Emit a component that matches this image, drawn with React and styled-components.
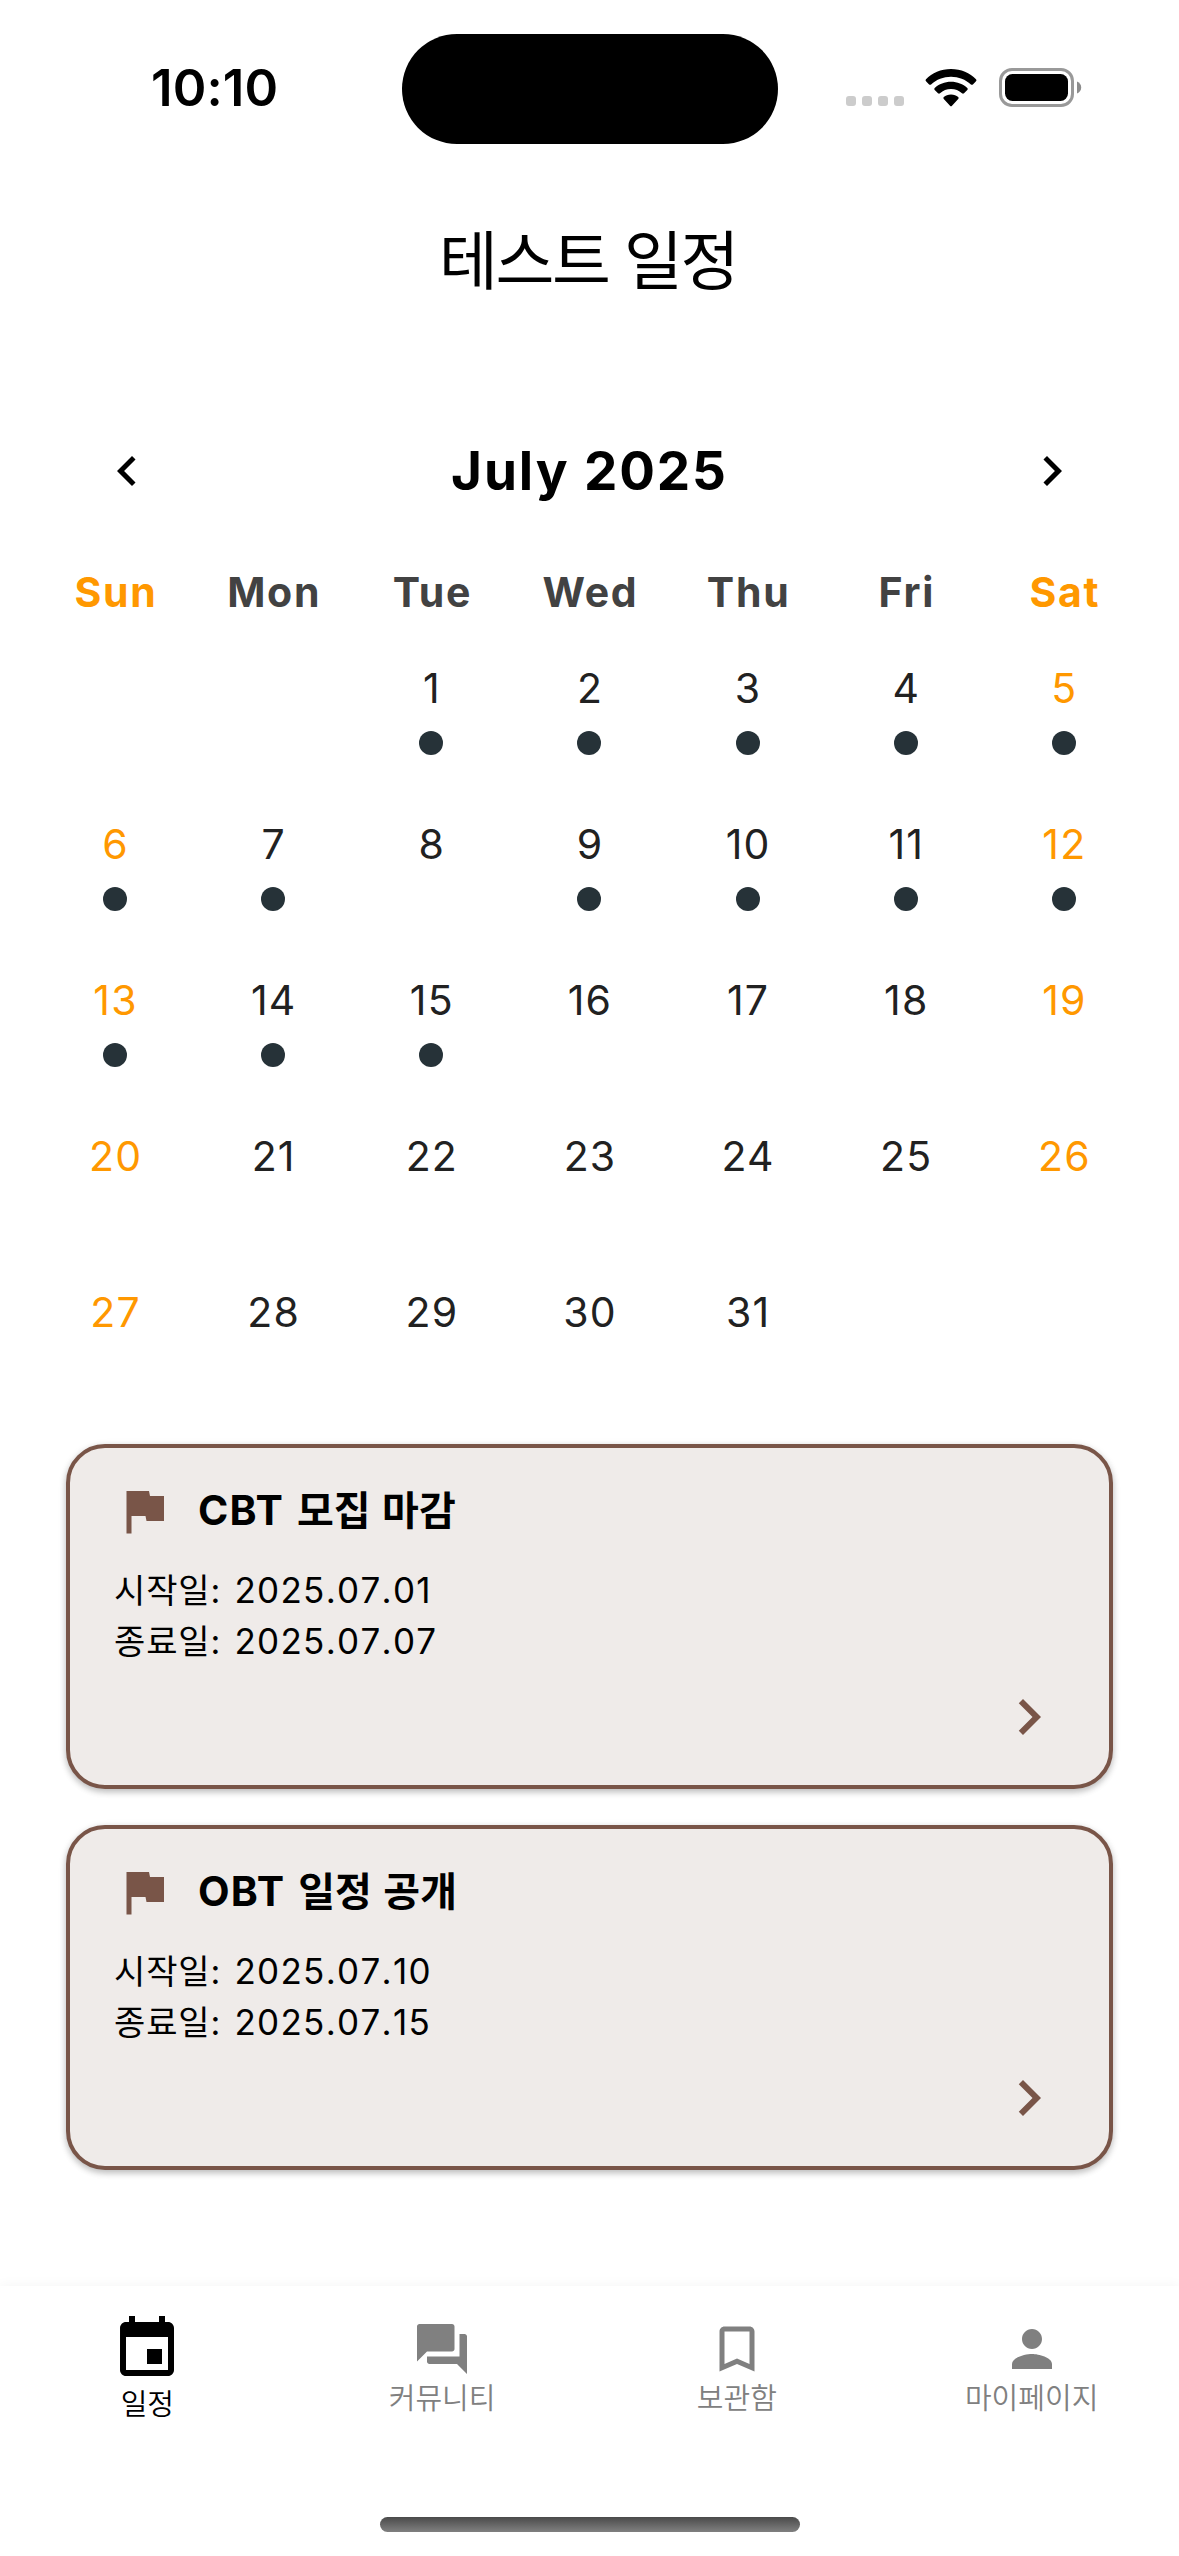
import React from "react";
import styled, { createGlobalStyle } from "styled-components";

const GlobalStyle = createGlobalStyle`
  * { box-sizing: border-box; }
  body { margin: 0; background: #fff; }
`;

const Screen = styled.div`
  width: 1179px;
  height: 2556px;
  display: flex;
  flex-direction: column;
  overflow: hidden;
  background: #fff;
  color: #000;
  font-family: Inter, "Noto Sans CJK KR", sans-serif;
  white-space: nowrap;
`;

const StatusBar = styled.header`
  height: 177px;
  flex: none;
  display: grid;
  grid-template-columns: 402px 376px 1fr;
`;

const Clock = styled.div`
  padding: 57px 0 0 151px;
  font-size: 51px;
  line-height: 62px;
  font-weight: 600;
  letter-spacing: 0.1px;
`;

const Island = styled.div`
  margin-top: 33.7px;
  height: 110.7px;
  border-radius: 56px;
  background: #000;
`;

const StatusIcons = styled.div`
  display: flex;
  align-items: flex-start;
  padding: 67px 0 0 68px;
`;

const Signal = styled.div`
  display: flex;
  gap: 6px;
  margin: 29px 21px 0 0;
`;

const SignalDot = styled.i`
  width: 10px;
  height: 10px;
  border-radius: 3px;
  background: #ccc;
`;

const WifiIcon = styled.svg`
  width: 52px;
  height: 38px;
  margin: 2px 21px 0 0;
`;

const BatteryIcon = styled.svg`
  width: 84px;
  height: 41px;
`;

const PageTitle = styled.h1`
  margin: 0;
  height: 216px;
  flex: none;
  padding: 36px 3px 0 0;
  text-align: center;
  font-size: 64px;
  line-height: 95px;
  font-weight: 400;
  letter-spacing: -2.4px;
`;

const MonthBar = styled.div`
  height: 156px;
  flex: none;
  display: flex;
  align-items: center;
  justify-content: space-between;
  padding: 0 97px;
`;

const MonthName = styled.h2`
  margin: 0;
  font-size: 53px;
  line-height: 64px;
  font-weight: 650;
  letter-spacing: 1.9px;
`;

const Icon = styled.svg`
  display: block;
  width: ${(p) => p.$size || 60}px;
  height: ${(p) => p.$size || 60}px;
  fill: ${(p) => p.$color || "#000"};
`;

const WeekRow = styled.div`
  flex: none;
  display: grid;
  grid-template-columns: repeat(7, 1fr);
  padding: 0 36px;
  height: ${(p) => p.$height}px;
`;

const Weekday = styled.div`
  text-align: center;
  padding: 18px 0 0 2px;
  font-size: 41px;
  line-height: 50px;
  font-weight: 650;
  letter-spacing: 1.7px;
  color: ${(p) => (p.$weekend ? "#ff9800" : "#424242")};
`;

const Day = styled.div`
  display: flex;
  flex-direction: column;
  align-items: center;
  gap: 18px;
  padding-top: 19px;
  font-size: 41px;
  line-height: 50px;
  font-weight: 385;
  letter-spacing: 1.2px;
  color: ${(p) => (p.$weekend ? "#ff9800" : "#212121")};
`;

const DayNumber = styled.span`
  padding-left: 1px;
`;

const EventDot = styled.i`
  width: 24px;
  height: 24px;
  border-radius: 50%;
  background: #263238;
`;

const EventList = styled.main`
  flex: none;
  display: flex;
  flex-direction: column;
  gap: 36px;
  height: 842px;
  padding: 0 66px;
`;

const Card = styled.article`
  height: 345px;
  flex: none;
  border: 4px solid #795548;
  border-radius: 39px;
  background: #efebe9;
  padding: 33px 44px 0 44px;
  box-shadow: 0 3px 6px rgba(0, 0, 0, 0.2), 0 2px 9px rgba(0, 0, 0, 0.1);
`;

const CardHead = styled.div`
  display: flex;
  align-items: center;
  gap: 24px;
  height: 60px;
`;

const CardTitle = styled.h3`
  margin: 0;
  font-size: 41px;
  line-height: 58px;
  height: 60px;
  font-weight: 650;
  letter-spacing: 1.2px;
  word-spacing: 2px;
`;

const TitleHangul = styled.span`
  font-size: 40px;
  letter-spacing: 0;
`;

const Dates = styled.div`
  margin-top: 24px;
  font-size: 35px;
  line-height: 51px;
  font-weight: 380;
  font-kerning: none;
  font-feature-settings: "calt" 0;
  letter-spacing: 1.3px;
`;

const DateLabel = styled.span`
  margin-right: 2px;
  font-size: 34px;
  letter-spacing: 0.9px;
`;

const CardFoot = styled.div`
  display: flex;
  justify-content: flex-end;
  margin-top: 14px;
`;

const BottomNav = styled.nav`
  height: 270px;
  flex: none;
  display: flex;
  flex-direction: column;
  align-items: center;
  background: #fff;
  box-shadow: 0 -1px 12px rgba(0, 0, 0, 0.04);
`;

const Tabs = styled.div`
  width: 100%;
  height: 231px;
  display: grid;
  grid-template-columns: repeat(4, 1fr);
`;

const Tab = styled.div`
  display: flex;
  flex-direction: column;
  align-items: center;
  padding-top: ${(p) => (p.$active ? 27 : 33)}px;
  color: ${(p) => (p.$active ? "#000" : "#808080")};
`;

const TabLabel = styled.span`
  font-size: 29px;
  line-height: 40px;
  font-weight: 350;
`;

const HomeIndicator = styled.div`
  width: 420px;
  height: 15px;
  border-radius: 8px;
  background: linear-gradient(#4a4a4a, #808080);
`;

const icons = {
  left: "M15.41 7.41 14 6l-6 6 6 6 1.41-1.41L10.83 12z",
  right: "M10 6 8.59 7.41 13.17 12l-4.58 4.59L10 18l6-6z",
  flag: "M14.4 6 14 4H5v17h2v-7h5.6l.4 2h7V6z",
  event:
    "M17 12h-5v5h5v-5zM16 1v2H8V1H6v2H5c-1.11 0-1.99.9-1.99 2L3 19c0 1.1.89 2 2 2h14c1.1 0 2-.9 2-2V5c0-1.1-.9-2-2-2h-1V1h-2zm3 18H5V8h14v11z",
  chat: "M21 6h-2v9H6v2c0 .55.45 1 1 1h11l4 4V7c0-.55-.45-1-1-1zm-4 6V3c0-.55-.45-1-1-1H3c-.55 0-1 .45-1 1v14l4-4h10c.55 0 1-.45 1-1z",
  bookmark:
    "M17 3H7c-1.1 0-1.99.9-1.99 2L5 21l7-3 7 3V5c0-1.1-.9-2-2-2zm0 15-5-2.18L7 18V5h10v13z",
  person:
    "M12 12c2.21 0 4-1.79 4-4s-1.79-4-4-4-4 1.79-4 4 1.79 4 4 4zm0 2c-2.67 0-8 1.34-8 4v2h16v-2c0-2.66-5.33-4-8-4z",
};

function Glyph({ name, size, color }) {
  return (
    <Icon viewBox="0 0 24 24" $size={size} $color={color}>
      <path d={icons[name]} />
    </Icon>
  );
}

const weekdays = ["Sun", "Mon", "Tue", "Wed", "Thu", "Fri", "Sat"];
const firstWeekday = 2;
const eventDays = new Set([1, 2, 3, 4, 5, 6, 7, 9, 10, 11, 12, 13, 14, 15]);
const weeks = [0, 1, 2, 3, 4].map((w) =>
  weekdays.map((_, d) => {
    const n = w * 7 + d - firstWeekday + 1;
    return n >= 1 && n <= 31 ? n : null;
  })
);

const events = [
  { code: "CBT", name: "모집 마감", start: "2025.07.01", end: "2025.07.07" },
  { code: "OBT", name: "일정 공개", start: "2025.07.10", end: "2025.07.15" },
];

const tabs = [
  { icon: "event", label: "일정", active: true },
  { icon: "chat", label: "커뮤니티" },
  { icon: "bookmark", label: "보관함" },
  { icon: "person", label: "마이페이지" },
];

const isWeekend = (d) => d === 0 || d === 6;

export default function App() {
  return (
    <Screen>
      <GlobalStyle />
      <StatusBar>
        <Clock>10:10</Clock>
        <Island />
        <StatusIcons>
          <Signal>
            <SignalDot />
            <SignalDot />
            <SignalDot />
            <SignalDot />
          </Signal>
          <WifiIcon viewBox="0 0 52 38">
            <path d="M26 0C36 0 45 4 51 10.3q1 1 0 2L47.900 15.400q-1 .9-2 0C40.500 10.500 33.600 7.700 26 7.700S11.500 10.500 6.100 15.400q-1 .9-2 0L1 12.300q-1-1 0-2C7 4 16 0 26 0z" />
            <path d="M26 12.800c6.300 0 12 2.300 16.300 6.200q1 1 0 2L39 24.200q-1 .9-2 0C34 21.500 30.200 20 26 20s-8 1.500-11 4.200q-1 .9-2 0L9.700 21q-1-1 0-2C14 15.100 19.700 12.800 26 12.800z" />
            <path d="M26 25.500c3 0 5.400 1 7.200 2.500q1 1 0 2l-6.200 6.800q-1 1-2 0L18.800 30q-1-1 0-2c1.800-1.500 4.200-2.500 7.200-2.500z" />
          </WifiIcon>
          <BatteryIcon viewBox="0 0 84 41">
            <rect x="2.500" y="2.500" width="72" height="36" rx="11.500" fill="none" stroke="#999" strokeWidth="3" />
            <rect x="7" y="7" width="63" height="27" rx="7.500" />
            <path d="M79 14.500c2.800 1.200 4.200 3.300 4.200 6s-1.400 4.800-4.200 6z" fill="#8c8c8c" />
          </BatteryIcon>
        </StatusIcons>
      </StatusBar>

      <PageTitle>테스트 일정</PageTitle>

      <MonthBar>
        <Glyph name="left" />
        <MonthName>July 2025</MonthName>
        <Glyph name="right" />
      </MonthBar>

      <WeekRow $height={95}>
        {weekdays.map((name, d) => (
          <Weekday key={name} $weekend={isWeekend(d)}>
            {name}
          </Weekday>
        ))}
      </WeekRow>
      {weeks.map((week, w) => (
        <WeekRow key={w} $height={w === 4 ? 176 : 156}>
          {week.map((n, d) => (
            <Day key={d} $weekend={isWeekend(d)}>
              {n && <DayNumber>{n}</DayNumber>}
              {eventDays.has(n) && <EventDot />}
            </Day>
          ))}
        </WeekRow>
      ))}

      <EventList>
        {events.map((e) => (
          <Card key={e.code}>
            <CardHead>
              <Glyph name="flag" color="#795548" />
              <CardTitle>
                {e.code} <TitleHangul>{e.name}</TitleHangul>
              </CardTitle>
            </CardHead>
            <Dates>
              <div>
                <DateLabel>시작일:</DateLabel> {e.start}
              </div>
              <div>
                <DateLabel>종료일:</DateLabel> {e.end}
              </div>
            </Dates>
            <CardFoot>
              <Glyph name="right" size={72} color="#795548" />
            </CardFoot>
          </Card>
        ))}
      </EventList>

      <BottomNav>
        <Tabs>
          {tabs.map((t) => (
            <Tab key={t.label} $active={t.active}>
              <Glyph name={t.icon} size={t.active ? 72 : 60} color={t.active ? "#000" : "#808080"} />
              <TabLabel>{t.label}</TabLabel>
            </Tab>
          ))}
        </Tabs>
        <HomeIndicator />
      </BottomNav>
    </Screen>
  );
}
